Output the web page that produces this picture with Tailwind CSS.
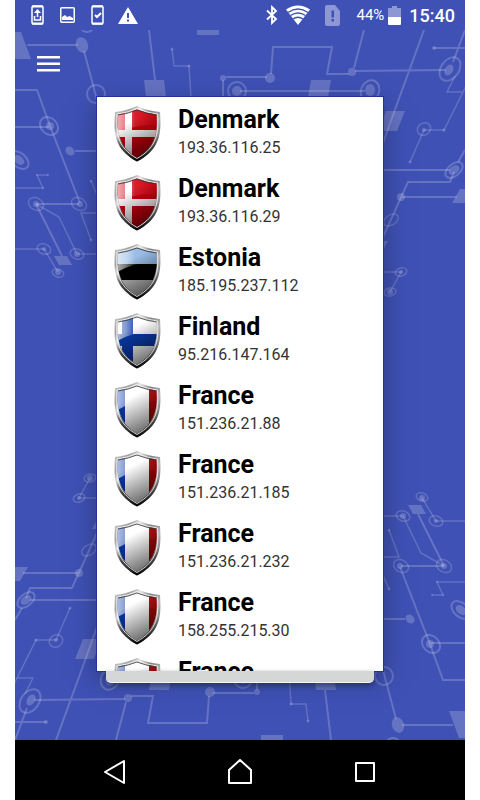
<!DOCTYPE html>
<html lang="en">
<head>
    <meta charset="UTF-8">
    <meta name="viewport" content="width=device-width, initial-scale=1.0">
    <title>Servers</title>
    <script src="https://cdn.jsdelivr.net/npm/@tailwindcss/browser@4"></script>
</head>
<body class="bg-white font-[Roboto,sans-serif]">
    <!-- Shared artwork -->
    <svg class="absolute w-0 h-0" aria-hidden="true">
        <defs>
            <linearGradient id="rim" x1="0" y1="0" x2="1" y2="1">
                <stop offset="0" stop-color="#d0d0d0"/>
                <stop offset=".2" stop-color="#a0a0a0"/>
                <stop offset=".3" stop-color="#e8e8e8"/>
                <stop offset=".45" stop-color="#808080"/>
                <stop offset=".6" stop-color="#b8b8b8"/>
                <stop offset="1" stop-color="#333"/>
            </linearGradient>
            <linearGradient id="rimBottom" x1="0" y1="0" x2="0" y2="1">
                <stop offset=".5" stop-color="#000" stop-opacity="0"/>
                <stop offset="1" stop-color="#000" stop-opacity="1"/>
            </linearGradient>
            <linearGradient id="gloss" x1="0" y1="0" x2="1" y2="0">
                <stop offset="0" stop-color="#fff" stop-opacity=".75"/>
                <stop offset=".25" stop-color="#fff" stop-opacity=".5"/>
                <stop offset=".45" stop-color="#fff" stop-opacity=".12"/>
                <stop offset="1" stop-color="#fff" stop-opacity="0"/>
            </linearGradient>
            <linearGradient id="shade" x1=".3" y1=".3" x2=".6" y2="1">
                <stop offset="0" stop-color="#000" stop-opacity="0"/>
                <stop offset="1" stop-color="#000" stop-opacity=".65"/>
            </linearGradient>
            <clipPath id="field">
                <path d="M23 3.500Q33 7.500 42.500 8.500C43.500 22 43.500 40 23 51.500C3 40 3 22 4 8.500Q13 7.500 23 3.500Z"/>
            </clipPath>

            <g id="shieldRim">
                <path d="M23 0Q34 5 46 6C47.500 27 46.500 43 23 55.500C0 43-.5 27 1 6Q12 5 23 0Z" fill="url(#rim)"/>
                <path d="M23 0Q34 5 46 6C47.500 27 46.500 43 23 55.500C0 43-.5 27 1 6Q12 5 23 0Z" fill="url(#rimBottom)"/>
                <path d="M23 2.500Q34 7 43.500 8C44.500 26 44 41 23 52.500C2.500 41 2 26 3 8Q12 7 23 2.500Z" fill="none" stroke="#f4f4f4" stroke-opacity=".85"/>
            </g>
            <g id="shieldLight">
                <path d="M0 0H47V20Q22 16 0 30Z" fill="url(#gloss)" clip-path="url(#field)"/>
                <path d="M0 0H47V56H0Z" fill="url(#shade)" clip-path="url(#field)"/>
                <path d="M4 9Q13 8 23 4Q33 8 42.500 9" fill="none" stroke="#333" stroke-opacity=".8"/>
            </g>

            <symbol id="denmark" viewBox="0 0 47 56">
                <use href="#shieldRim"/>
                <g clip-path="url(#field)">
                    <path fill="#d2000e" d="M0 0H47V56H0Z"/>
                    <path fill="#fff" d="M11 0H18V24H47V31H18V56H11V31H0V24H11Z"/>
                </g>
                <use href="#shieldLight"/>
            </symbol>
            <symbol id="estonia" viewBox="0 0 47 56">
                <use href="#shieldRim"/>
                <g clip-path="url(#field)">
                    <path fill="#8fb4e2" d="M0 0H47V20H0Z"/>
                    <path fill="#000" d="M0 20H47V36H0Z"/>
                    <path fill="#d0d0d0" d="M0 36H47V56H0Z"/>
                </g>
                <use href="#shieldLight"/>
            </symbol>
            <symbol id="finland" viewBox="0 0 47 56">
                <use href="#shieldRim"/>
                <g clip-path="url(#field)">
                    <path fill="#fff" d="M0 0H47V56H0Z"/>
                    <path fill="#0a3aa8" d="M8 0H19V21H47V33H19V56H8V33H0V21H8Z"/>
                </g>
                <use href="#shieldLight"/>
            </symbol>
            <symbol id="france" viewBox="0 0 47 56">
                <use href="#shieldRim"/>
                <g clip-path="url(#field)">
                    <path fill="#fff" d="M0 0H47V56H0Z"/>
                    <path fill="#0838a8" d="M0 0H11V56H0Z"/>
                    <path fill="#a80508" d="M35 0H47V56H35Z"/>
                </g>
                <use href="#shieldLight"/>
            </symbol>

            <!-- Circuit board pattern, used at the top and turned round at the bottom -->
            <symbol id="circuit" viewBox="15 30 450 270">
                <g fill="none" stroke="#fff" stroke-opacity=".2" stroke-width="2">
                    <path d="M27 45H78M84 51L97 100M149 30L155 80M226 77H267M271 74L273 47H332L327 74H349M354 68L364 30M355 71L446 70M453 62L465 30M424 30L397 104L383 143M240 91H365M434 48H465"/>
                    <path d="M223 80V100"/>
                    <circle cx="96" cy="94" r="9"/>
                    <circle cx="87" cy="25" r="7"/>
                    <circle cx="237" cy="91" r="9"/>
                    <ellipse cx="370" cy="91" rx="9" ry="11" transform="rotate(25 370 91)"/>
                    <ellipse cx="450" cy="69" rx="9" ry="13" transform="rotate(35 450 69)"/>
                    <path d="M15 90H37L50 126L80 203M15 127H49M75 151H97M36 204H79M36 204L62 256M383 170H450M458 162L465 150M454 172L450 182H408L383 237M401 197H457"/>
                    <ellipse cx="49" cy="126" rx="10" ry="8" transform="rotate(45 49 126)"/>
                    <ellipse cx="19" cy="160" rx="11" ry="7" transform="rotate(40 19 160)"/>
                    <ellipse cx="454" cy="170" rx="10" ry="6" transform="rotate(-40 454 170)"/>
                </g>
                <g fill="none" stroke="#fff" stroke-opacity=".18" stroke-width="1.500">
                    <path d="M172 49L174 66H189L191 97M455 76L447 92H463L444 130H424L410 162M463 92L467 84M15 188H43L37 175H48M36 204L59 217L77 254H97M15 249H44L58 272M91 181L97 195M96 213H81L91 240M383 272H401L390 292"/>
                    <ellipse cx="36" cy="204" rx="8" ry="6" transform="rotate(30 36 204)"/>
                    <ellipse cx="79" cy="204" rx="8" ry="6" transform="rotate(30 79 204)"/>
                    <ellipse cx="77" cy="254" rx="7" ry="5" transform="rotate(20 77 254)"/>
                    <ellipse cx="44" cy="249" rx="7" ry="5" transform="rotate(20 44 249)"/>
                    <ellipse cx="58" cy="273" rx="6" ry="4" transform="rotate(20 58 273)"/>
                    <ellipse cx="424" cy="129" rx="7" ry="6" transform="rotate(-35 424 129)"/>
                    <ellipse cx="391" cy="220" rx="8" ry="5" transform="rotate(-30 391 220)"/>
                    <ellipse cx="401" cy="272" rx="6" ry="4" transform="rotate(-20 401 272)"/>
                    <ellipse cx="390" cy="292" rx="6" ry="4" transform="rotate(-10 390 292)"/>
                </g>
                <g fill="#fff" fill-opacity=".2">
                    <path d="M15 32H21L31 59H15ZM144 80H164L166 97H146ZM197 30H219V35H197ZM311 80H331L328 97H308ZM386 111H405L397 131H379ZM460 189H465V203H452ZM54 256H67L72 265H59ZM383 241H388L383 250Z"/>
                    <ellipse cx="82" cy="45" rx="6" ry="8" transform="rotate(-20 82 45)"/>
                    <circle cx="223" cy="78" r="3"/>
                    <circle cx="237" cy="91" r="5"/>
                    <circle cx="270" cy="78" r="5"/>
                    <circle cx="352" cy="72" r="4"/>
                    <circle cx="434" cy="48" r="2"/>
                    <ellipse cx="370" cy="90" rx="5" ry="6"/>
                    <ellipse cx="449" cy="70" rx="4" ry="6" transform="rotate(30 449 70)"/>
                    <circle cx="172" cy="49" r="1.500"/>
                    <circle cx="189" cy="66" r="1.500"/>
                    <circle cx="50" cy="126" r="4"/>
                    <ellipse cx="19" cy="160" rx="6" ry="4" transform="rotate(40 19 160)"/>
                    <ellipse cx="70" cy="151" rx="5" ry="4" transform="rotate(45 70 151)"/>
                    <circle cx="36" cy="204" r="3"/>
                    <circle cx="80" cy="204" r="3"/>
                    <circle cx="77" cy="254" r="3"/>
                    <circle cx="44" cy="249" r="2"/>
                    <circle cx="58" cy="272" r="3"/>
                    <circle cx="43" cy="188" r="1"/>
                    <circle cx="37" cy="175" r="1"/>
                    <circle cx="48" cy="175" r="1"/>
                    <circle cx="91" cy="181" r="1.500"/>
                    <circle cx="91" cy="240" r="1.500"/>
                    <circle cx="424" cy="130" r="2"/>
                    <circle cx="444" cy="130" r="1.500"/>
                    <circle cx="410" cy="162" r="1.500"/>
                    <ellipse cx="454" cy="170" rx="6" ry="4" transform="rotate(-35 454 170)"/>
                    <circle cx="401" cy="197" r="4"/>
                    <circle cx="401" cy="272" r="2"/>
                    <circle cx="390" cy="292" r="3"/>
                </g>
            </symbol>
        </defs>
    </svg>

    <div class="h-screen px-[15px] flex flex-col">
        <!-- Status bar -->
        <header class="h-[30px] shrink-0 bg-[#3f51b5] text-white flex items-center justify-between pl-4 pr-[10px]">
            <div class="flex items-center gap-4">
                <svg class="w-[13px] h-5" viewBox="0 0 13 20" fill="none" stroke="#fff" stroke-width="1.500">
                    <rect x="1" y="1" width="11" height="18" rx="1.500"/>
                    <path stroke-width="2" d="M1 1.500H12M1 18.500H12"/>
                    <path d="M3.500 11V15H9.500V11M6.500 12V6"/>
                    <path fill="#fff" stroke="none" d="M6.500 4L10 8H3Z"/>
                </svg>
                <svg class="w-[15px] h-4" viewBox="0 0 15 16" fill="none" stroke="#fff">
                    <rect x=".75" y=".75" width="13.500" height="14.500" rx="1" stroke-width="1.500"/>
                    <path fill="#fff" stroke="none" d="M2 13V10L5 8L7 10L9.500 9L13 11V13Z"/>
                </svg>
                <svg class="w-[13px] h-5" viewBox="0 0 13 20" fill="none" stroke="#fff" stroke-width="1.500">
                    <rect x="1" y="1" width="11" height="18" rx="1.500"/>
                    <path stroke-width="2" d="M1 1.500H12M1 18.500H12M4 10L6 12L10 8"/>
                </svg>
                <svg class="w-5 h-[17px] -ml-[2px]" viewBox="0 0 20 17">
                    <path fill="#fff" d="M10 0L20 17H0Z"/>
                    <path fill="#3f51b5" d="M9 6H11V11H9ZM9 12.500H11V14.500H9Z"/>
                </svg>
            </div>
            <div class="flex items-center">
                <svg class="w-3 h-5" viewBox="0 0 12 20" fill="none" stroke="#fff" stroke-width="1.800">
                    <path d="M1 5.500L10 14L6 18V2L10 6L1 14.500"/>
                </svg>
                <svg class="w-[26px] h-5 ml-[7px]" viewBox="0 0 26 20">
                    <path fill="#fff" d="M13 20L1 4.500Q13-3.500 25 4.500Z"/>
                    <path fill="none" stroke="#3f51b5" stroke-width="1.500" d="M3 7.500Q13 .5 23 7.500M5.500 10.500Q13 5.500 20.500 10.500M8 14Q13 10.500 18 14"/>
                </svg>
                <svg class="w-[15px] h-[21px] ml-[14px]" viewBox="0 0 15 21">
                    <path fill="#8c97d3" d="M2 0H10L15 6V19Q15 21 13 21H2Q0 21 0 19V2Q0 0 2 0Z"/>
                    <path fill="#3f51b5" d="M6.500 5.500H9V12.500H6.500ZM6.500 14H9V16.500H6.500Z"/>
                </svg>
                <span class="text-[15px] ml-4">44%</span>
                <svg class="w-[13px] h-[19px] ml-1" viewBox="0 0 13 19">
                    <path fill="#8c97d3" d="M4 0H9V2H13V11H0V2H4Z"/>
                    <path fill="#fff" d="M0 11H13V18Q13 19 12 19H1Q0 19 0 18Z"/>
                </svg>
                <span class="text-[18px] font-medium ml-2">15:40</span>
            </div>
        </header>

        <main class="relative flex-1 min-h-0 bg-[#3f51b5] flex flex-col overflow-hidden">
            <svg class="absolute top-0 left-0 w-full aspect-[5/3]" aria-hidden="true"><use href="#circuit"/></svg>
            <svg class="absolute bottom-0 left-0 w-full aspect-[5/3] rotate-180" aria-hidden="true"><use href="#circuit"/></svg>

            <!-- Toolbar -->
            <div class="relative h-[67px] shrink-0 flex items-center px-[22px]">
                <button type="button" aria-label="Menu">
                    <svg class="w-6 h-4" viewBox="0 0 24 16" fill="#fff">
                        <path d="M0 0H23V2.500H0ZM0 6.500H23V9H0ZM0 13H23V15.500H0Z"/>
                    </svg>
                </button>
            </div>

            <!-- Server list -->
            <div class="relative flex-1 min-h-0 mx-[82px] flex flex-col">
                <ul id="serverList" class="relative z-10 flex-1 min-h-0 overflow-hidden bg-white pt-[2px] shadow-[0_0_0_1px_#22339b,0_8px_24px_rgba(30,35,70,0.55)]"></ul>
            </div>
            <div class="relative z-10 h-3 shrink-0 mx-[91px] rounded-b-[5px] bg-[#d5d7d6] border-b border-[#f5f5f5] shadow-[0_2px_5px_rgba(20,25,60,0.5)]"></div>
            <div class="h-[57px] shrink-0"></div>
        </main>

        <!-- Navigation bar -->
        <nav class="h-[60px] shrink-0 bg-black flex items-center justify-center gap-[99px] pt-1">
            <button type="button" aria-label="Back">
                <svg class="w-[26px] h-[26px]" viewBox="0 0 26 26" fill="none" stroke="#fff" stroke-width="2" stroke-linejoin="round">
                    <path d="M22 2V24L3 13Z"/>
                </svg>
            </button>
            <button type="button" aria-label="Home">
                <svg class="w-[26px] h-[26px]" viewBox="0 0 26 26" fill="none" stroke="#fff" stroke-width="2" stroke-linejoin="round">
                    <path d="M13 1L24 11V24H2V11Z"/>
                </svg>
            </button>
            <button type="button" aria-label="Recent apps">
                <svg class="w-[26px] h-[26px]" viewBox="0 0 26 26" fill="none" stroke="#fff" stroke-width="2" stroke-linejoin="round">
                    <path d="M4 4H22V22H4Z"/>
                </svg>
            </button>
        </nav>
    </div>

    <script>
        const servers = [
            { country: "Denmark", flag: "denmark", ip: "193.36.116.25" },
            { country: "Denmark", flag: "denmark", ip: "193.36.116.29" },
            { country: "Estonia", flag: "estonia", ip: "185.195.237.112" },
            { country: "Finland", flag: "finland", ip: "95.216.147.164" },
            { country: "France", flag: "france", ip: "151.236.21.88" },
            { country: "France", flag: "france", ip: "151.236.21.185" },
            { country: "France", flag: "france", ip: "151.236.21.232" },
            { country: "France", flag: "france", ip: "158.255.215.30" },
            { country: "France", flag: "france", ip: "" }
        ];

        // One tappable row per server
        document.getElementById('serverList').innerHTML = servers.map(server => `
            <li>
                <button type="button" class="w-full h-[69px] pl-[17px] flex items-center gap-[17px] text-left">
                    <svg class="w-[47px] h-14 shrink-0" aria-hidden="true"><use href="#${server.flag}"/></svg>
                    <span>
                        <span class="block h-7 text-[25px] leading-[28px] font-bold text-black">${server.country}</span>
                        <span class="block h-7 text-[16px] leading-[28px] text-[#333]">${server.ip}</span>
                    </span>
                </button>
            </li>
        `).join('');
    </script>
</body>
</html>
